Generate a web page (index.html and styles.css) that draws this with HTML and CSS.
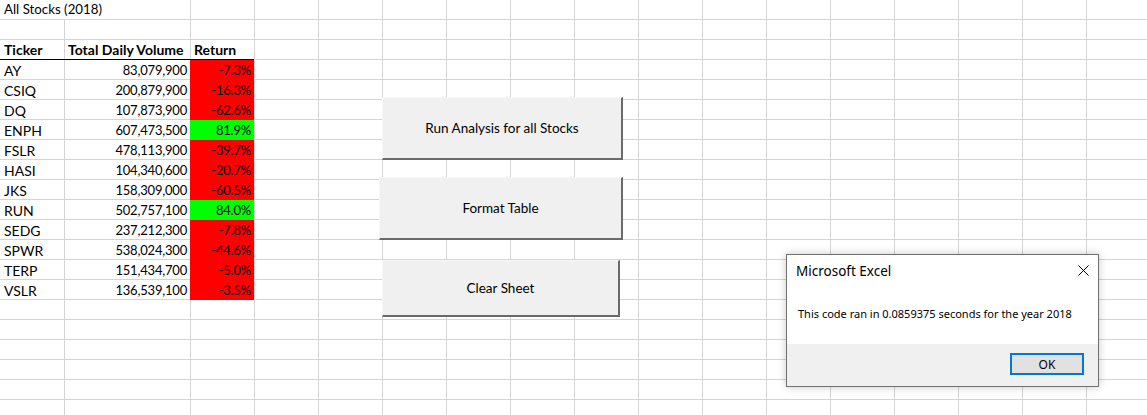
FILE: index.html
```html
<!DOCTYPE html>
<html lang="en">
<head>
<meta charset="utf-8">
<title>All Stocks (2018)</title>
<link rel="stylesheet" href="styles.css">
</head>
<body>
<div class="sheet">
  <div class="table">
    <div class="cell title">All Stocks (2018)</div>
    <div class="cell spacer"></div>

    <div class="cell head">Ticker</div>
    <div class="cell head">Total Daily Volume</div>
    <div class="cell head">Return</div>

    <div class="cell">AY</div><div class="cell num">83,079,900</div><div class="cell num neg">-7.3%</div>
    <div class="cell">CSIQ</div><div class="cell num">200,879,900</div><div class="cell num neg">-16.3%</div>
    <div class="cell">DQ</div><div class="cell num">107,873,900</div><div class="cell num neg">-62.6%</div>
    <div class="cell">ENPH</div><div class="cell num">607,473,500</div><div class="cell num pos">81.9%</div>
    <div class="cell">FSLR</div><div class="cell num">478,113,900</div><div class="cell num neg">-39.7%</div>
    <div class="cell">HASI</div><div class="cell num">104,340,600</div><div class="cell num neg">-20.7%</div>
    <div class="cell">JKS</div><div class="cell num">158,309,000</div><div class="cell num neg">-60.5%</div>
    <div class="cell">RUN</div><div class="cell num">502,757,100</div><div class="cell num pos">84.0%</div>
    <div class="cell">SEDG</div><div class="cell num">237,212,300</div><div class="cell num neg">-7.8%</div>
    <div class="cell">SPWR</div><div class="cell num">538,024,300</div><div class="cell num neg">-44.6%</div>
    <div class="cell">TERP</div><div class="cell num">151,434,700</div><div class="cell num neg">-5.0%</div>
    <div class="cell">VSLR</div><div class="cell num">136,539,100</div><div class="cell num neg">-3.5%</div>
  </div>

  <div class="form-btn btn-run">Run Analysis for all Stocks</div>
  <div class="form-btn btn-format">Format Table</div>
  <div class="form-btn btn-clear">Clear Sheet</div>

  <div class="msgbox">
    <div class="msg-head">
      <span class="msg-title">Microsoft Excel</span>
      <svg class="msg-close" width="11" height="11" viewBox="0 0 11 11" aria-hidden="true">
        <path d="M0.5 0.5 L10.5 10.5 M10.5 0.5 L0.5 10.5" stroke="#000" stroke-width="1" fill="none"/>
      </svg>
    </div>
    <div class="msg-body">This code ran in 0.0859375 seconds for the year 2018</div>
    <div class="msg-foot"><div class="msg-ok">OK</div></div>
  </div>
</div>
</body>
</html>
```

FILE: styles.css
```css
html, body {
  margin: 0;
  padding: 0;
}

body {
  width: 1147px;
  height: 415px;
  overflow: hidden;
  background: #fff;
  font-family: Lato, "Liberation Sans", sans-serif;
  color: #000;
}

.sheet {
  position: relative;
  width: 1147px;
  height: 415px;
  background-color: #fff;
  background-image:
    repeating-linear-gradient(to bottom, transparent 0 19px, #d4d4d4 19px 20px),
    linear-gradient(to right, transparent 0 64px, #d4d4d4 64px 65px, transparent 65px 190px, #d4d4d4 190px 191px, transparent 191px),
    repeating-linear-gradient(to right, #d4d4d4 0 1px, transparent 1px 64px);
  background-repeat: repeat, no-repeat, no-repeat;
  background-position: 0 0, 0 0, 254px 0;
}

.table {
  display: grid;
  grid-template-columns: 64px 126px 64px;
  grid-auto-rows: 20px;
  width: 254px;
}

.cell {
  font-size: 14px;
  line-height: 19px;
  padding: 1px 3px 0 4px;
  white-space: nowrap;
  overflow: visible;
  box-sizing: border-box;
}

.title {
  grid-column: 1 / 3;
  background: #fff;
  border-bottom: 1px solid #d4d4d4;
  padding-top: 0;
  font-size: 13.3px;
  line-height: 19px;
}

.spacer {
  grid-column: 1 / -1;
}

.head {
  font-weight: 700;
  border-bottom: 1px solid #000;
  line-height: 18px;
}

.num {
  font-size: 13px;
  letter-spacing: -0.2px;
  text-align: right;
  padding-right: 3px;
}

.neg {
  background: #ff0000;
}

.pos {
  background: #00ff00;
}

.form-btn {
  position: absolute;
  box-sizing: border-box;
  background: #f0f0f0;
  border-top: 1px solid #f7f7f7;
  border-left: 1px solid #f7f7f7;
  border-right: 2px solid #6a6a6a;
  border-bottom: 2px solid #6a6a6a;
  display: flex;
  align-items: center;
  justify-content: center;
  font-size: 13.5px;
  color: #000;
}

.btn-run {
  left: 382px;
  top: 97px;
  width: 241px;
  height: 63px;
}

.btn-format {
  left: 379px;
  top: 177px;
  width: 244px;
  height: 63px;
}

.btn-clear {
  left: 382px;
  top: 260px;
  width: 238px;
  height: 57px;
}

.msgbox {
  position: absolute;
  left: 786px;
  top: 254px;
  width: 313px;
  height: 133px;
  box-sizing: border-box;
  border: 1px solid #707070;
  background: #fff;
  box-shadow: 0 0 8px rgba(0, 0, 0, 0.22);
  display: flex;
  flex-direction: column;
  font-family: "Noto Sans", "Open Sans", sans-serif;
}

.msg-head {
  height: 29px;
  display: flex;
  align-items: center;
  justify-content: space-between;
  padding: 0 9px 0 9px;
  box-sizing: border-box;
}

.msg-title {
  font-size: 13.5px;
  color: #000;
  padding-top: 2px;
}

.msg-close {
  display: block;
  margin-top: 1px;
}

.msg-body {
  padding: 22px 0 0 11px;
  font-size: 11px;
  line-height: 16px;
  color: #000;
}

.msg-foot {
  margin-top: auto;
  height: 42px;
  background: #f0f0f0;
  display: flex;
  justify-content: flex-end;
  align-items: flex-start;
  padding: 9px 14px 0 0;
  box-sizing: border-box;
}

.msg-ok {
  width: 74px;
  height: 22px;
  box-sizing: border-box;
  border: 2px solid #0078d7;
  background: #e1e1e1;
  font-size: 12px;
  display: flex;
  align-items: center;
  justify-content: center;
  color: #000;
}
```
